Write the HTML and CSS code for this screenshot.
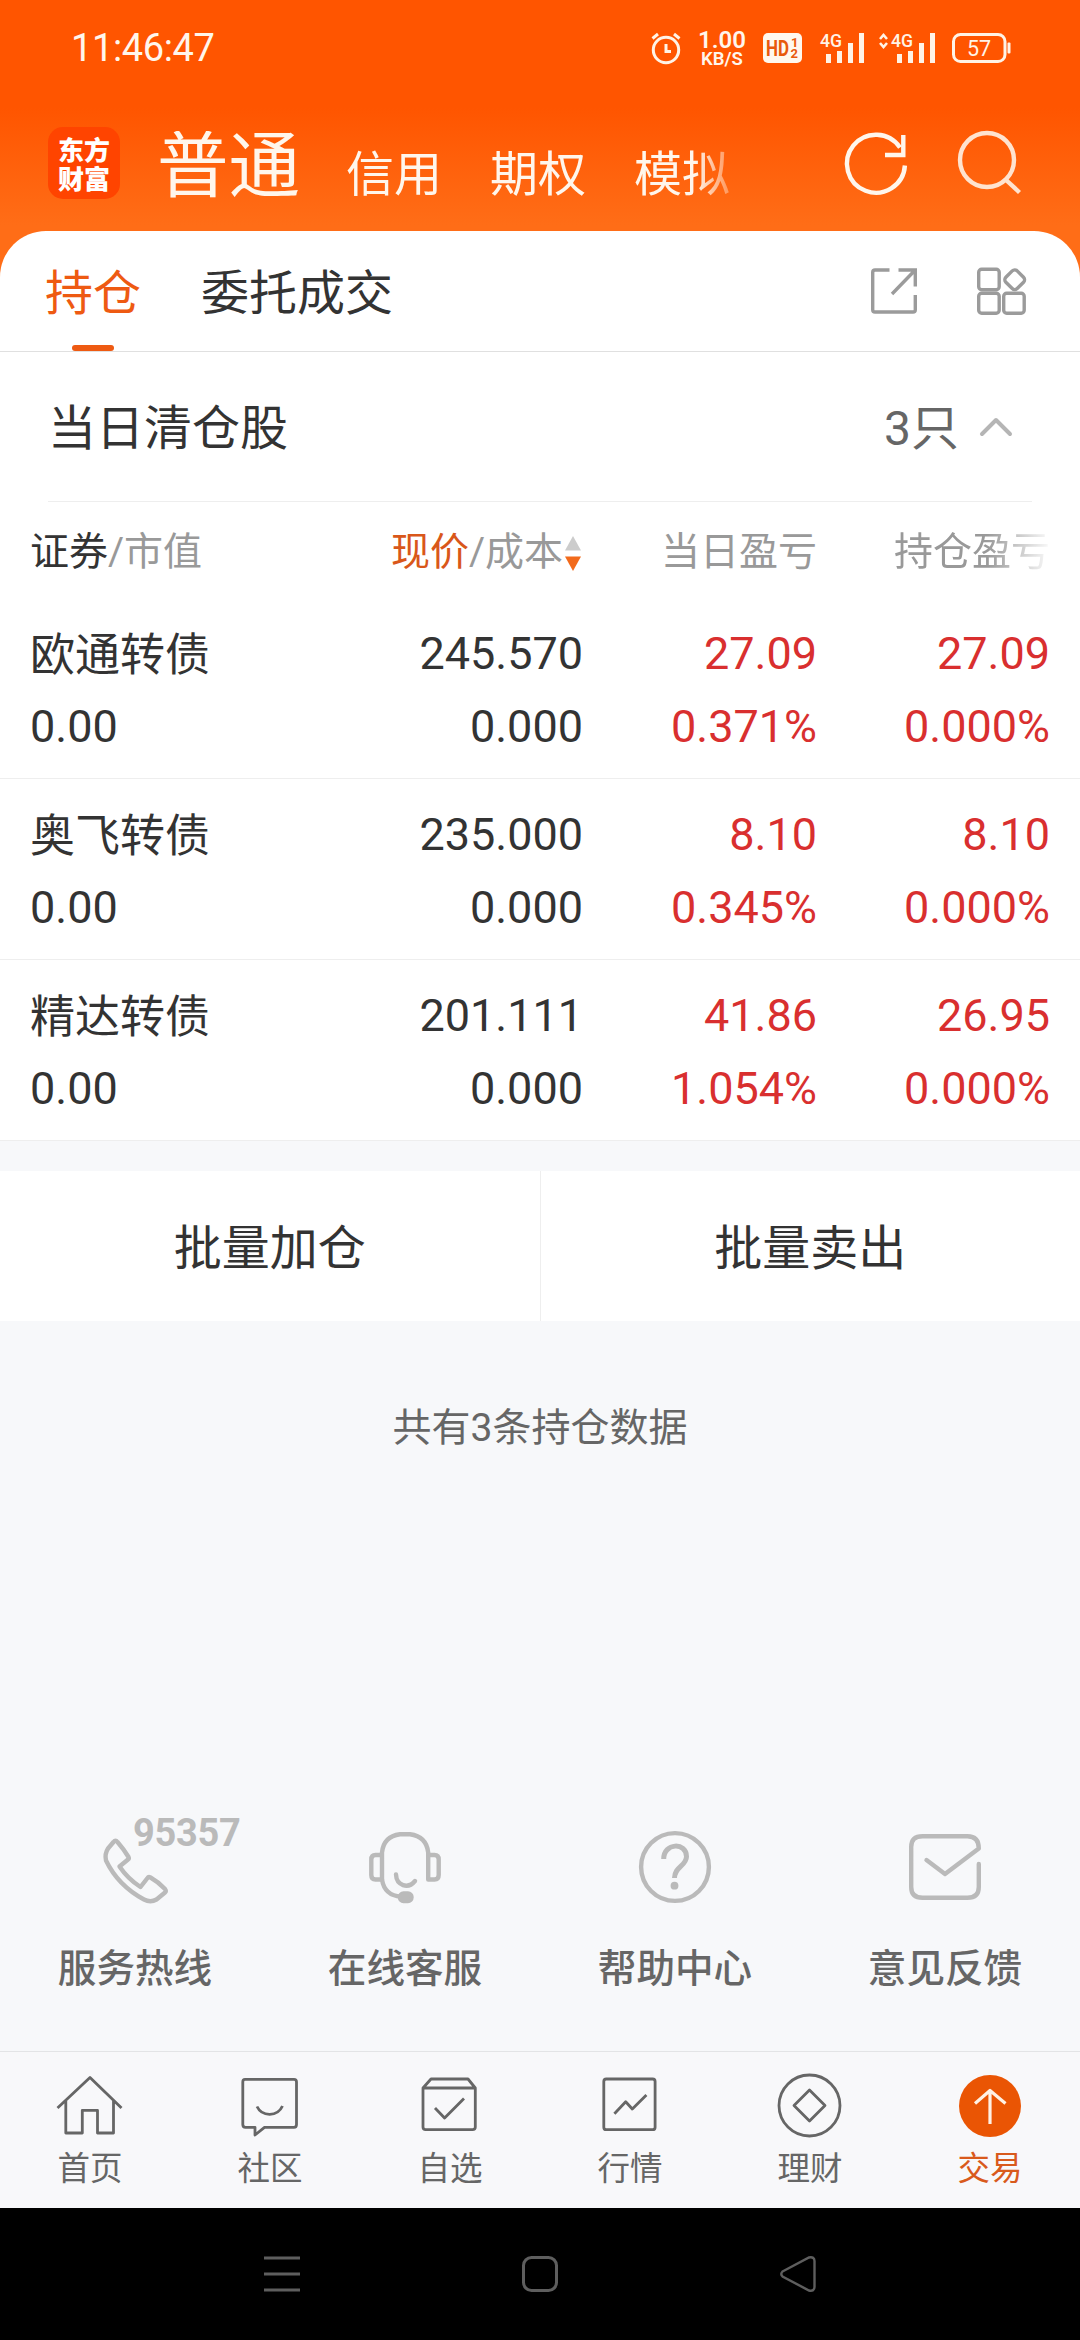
FILE: index.html
```html
<!DOCTYPE html>
<html lang="zh-CN">
<head>
    <meta charset="UTF-8">
    <meta name="viewport" content="width=device-width, initial-scale=1.0">
    <title>东方财富 - 交易</title>
    <link rel="stylesheet" href="styles.css">
</head>
<body>
    <div class="top">
        <div class="status-bar">
            <span class="clock">11:46:47</span>
            <div class="status-icons">
                <svg class="alarm" width="30" height="32" viewBox="0 0 30 32" fill="none" stroke="#fff3e6" stroke-width="3">
                    <circle cx="15" cy="18" r="12.7"/>
                    <path d="M1.5 6.5L7 2M28.5 6.5L23 2M15 12v7.5h5"/>
                </svg>
                <div class="speed"><b>1.00</b><span>KB/S</span></div>
                <svg class="hd" width="39" height="30" viewBox="0 0 39 30">
                    <rect width="39" height="30" rx="5" fill="#fff8ee"/>
                    <text x="3" y="23" font-size="22" textLength="23" lengthAdjust="spacingAndGlyphs">HD</text>
                    <text x="28" y="14" font-size="13">1</text>
                    <text x="27.5" y="25" font-size="13">2</text>
                </svg>
                <svg class="signal" width="44" height="30" viewBox="0 0 44 30">
                    <text x="0" y="14" font-size="19" textLength="22" lengthAdjust="spacingAndGlyphs">4G</text>
                    <path d="M6 21h5v9h-5zM17 18h5v12h-5zM28 10h5v20h-5zM39 0h5v30h-5z"/>
                </svg>
                <svg class="signal signal-2" width="56" height="30" viewBox="0 0 56 30">
                    <path d="M1 6l3.5-4 3.5 4M1 10l3.5 4 3.5-4" fill="none" stroke="#fff3e6" stroke-width="2.6"/>
                    <text x="12" y="14" font-size="19" textLength="22" lengthAdjust="spacingAndGlyphs">4G</text>
                    <path d="M18 21h5v9h-5zM29 18h5v12h-5zM40 10h5v20h-5zM51 0h5v30h-5z"/>
                </svg>
                <svg class="battery" width="59" height="30" viewBox="0 0 59 30">
                    <rect x="1.5" y="1.5" width="51.5" height="27" rx="7" fill="none" stroke="#fff3e6" stroke-width="3"/>
                    <rect x="55.5" y="9.5" width="3" height="11" rx="1" fill="#fff3e6"/>
                    <text x="27" y="22.5" font-size="21.5" text-anchor="middle">57</text>
                </svg>
            </div>
        </div>

        <header class="header">
            <div class="logo"><span>东方</span><span>财富</span></div>
            <nav class="accounts">
                <a class="current">普通</a>
                <a>信用</a>
                <a>期权</a>
                <a>模拟</a>
            </nav>
            <svg class="refresh" width="66" height="72" viewBox="0 0 66 72" fill="none" stroke="#fff6ec" stroke-width="4.4">
                <path d="M61.9 37.5A29 29 0 1 1 57 19.5"/>
                <path d="M60.3 7v20H42"/>
            </svg>
            <svg class="search" width="66" height="72" viewBox="0 0 66 72" fill="none" stroke="#ffe3cf" stroke-width="4.4">
                <circle cx="30" cy="32" r="27"/>
                <path d="M48.500 51.500L62.500 64.500"/>
            </svg>
        </header>
    </div>

    <main class="panel">
        <div class="tabs">
            <a class="tab active">持仓</a>
            <a class="tab">委托成交</a>
            <div class="tools">
                <svg width="46" height="48" viewBox="0 0 46 48" fill="none" stroke="#9b9b9b" stroke-width="3.4">
                    <path d="M18.500 3H4Q1.700 3 1.700 5.300V42.700Q1.700 45 4 45H42Q44.300 45 44.300 42.700V28"/>
                    <path d="M27.500 3H44.300V19.500M43.500 3.800L21 27"/>
                </svg>
                <svg width="50" height="48" viewBox="0 0 50 48" fill="none" stroke="#9b9b9b" stroke-width="3.4">
                    <rect x="1.700" y="2.200" width="20.500" height="20.500" rx="3"/>
                    <rect x="1.700" y="26.300" width="20.500" height="20" rx="3"/>
                    <rect x="26.700" y="26.300" width="20.500" height="20" rx="3"/>
                    <rect x="29.700" y="4.700" width="16" height="16" rx="3.500" transform="rotate(45 37.700 12.700)"/>
                </svg>
            </div>
        </div>

        <section class="cleared">
            <h2>当日清仓股</h2>
            <span class="count">3只</span>
            <svg width="34" height="20" viewBox="0 0 34 20" fill="none" stroke="#b5b5b5" stroke-width="4" stroke-linecap="round" stroke-linejoin="round">
                <path d="M3 17L17 3L31 17"/>
            </svg>
        </section>

        <div class="row thead">
            <div><span class="dark">证券</span>/市值</div>
            <div class="sorted"><span class="orange">现价</span>/成本<svg width="16" height="35" viewBox="0 0 16 35">
                <path d="M8 0L16 14.500H0z" fill="#ccc"/>
                <path d="M0 20.500H16L8 35z" fill="#f26a1b"/>
            </svg></div>
            <div>当日盈亏</div>
            <div class="fade">持仓盈亏</div>
        </div>

        <div class="row">
            <div><span class="name">欧通转债</span><br>0.00</div>
            <div>245.570<br>0.000</div>
            <div class="red">27.09<br>0.371%</div>
            <div class="red">27.09<br>0.000%</div>
        </div>
        <div class="row">
            <div><span class="name">奥飞转债</span><br>0.00</div>
            <div>235.000<br>0.000</div>
            <div class="red">8.10<br>0.345%</div>
            <div class="red">8.10<br>0.000%</div>
        </div>
        <div class="row">
            <div><span class="name">精达转债</span><br>0.00</div>
            <div>201.111<br>0.000</div>
            <div class="red">41.86<br>1.054%</div>
            <div class="red">26.95<br>0.000%</div>
        </div>
    </main>

    <div class="batch">
        <a>批量加仓</a>
        <a>批量卖出</a>
    </div>

    <p class="summary">共有3条持仓数据</p>

    <div class="services">
        <a>
            <svg width="72" height="72" viewBox="0 0 72 72">
                <path d="M14.500 11Q16.500 8.500 18.500 11Q25 18.500 29.500 26Q30.300 27.500 29 28.500L20.500 35.500Q29 48 41.500 56L48.500 47Q49.500 45.500 51.500 46.500Q59.500 51 66 58Q67.500 60 66 61.500L57.500 68.500Q51.500 72 45 68.500Q19 54.500 7 29.500Q5.500 23 9 17.500Z"/>
            </svg>
            <span class="number">95357</span>
            服务热线
        </a>
        <a>
            <svg width="72" height="72" viewBox="0 0 72 72">
                <path d="M13 24H6.500Q2.300 24 2.300 28.500V44Q2.300 48.500 6.500 48.500H13V21.500Q14.500 5.500 31 3.200H41Q57.500 5.500 59.200 21.500V48.500H65.500Q69.700 48.500 69.700 44V28.500Q69.700 24 65.500 24H59.500"/>
                <path d="M13 48.500Q15.500 64.500 32 65.700"/>
                <path d="M27 43.500C27.500 54.500 39 58.500 46 50"/>
                <rect x="31" y="62.500" width="11.500" height="7.500" rx="3.500" fill="#bababa"/>
            </svg>
            在线客服
        </a>
        <a>
            <svg width="72" height="72" viewBox="0 0 72 72">
                <circle cx="36" cy="36" r="33.900"/>
                <path d="M24.700 28C24.700 11.500 47.500 11 47.500 25.500C47.500 35 35.500 35.500 35.500 47" stroke-linecap="butt" stroke-width="5"/>
                <circle cx="35.500" cy="54.700" r="3.900" fill="#bababa" stroke="none"/>
            </svg>
            帮助中心
        </a>
        <a>
            <svg width="72" height="72" viewBox="0 0 72 72">
                <path d="M69.800 33V56Q69.800 66.800 58.500 66.800H13.500Q2.200 66.800 2.200 56V16Q2.200 5.200 13.500 5.200H58.500Q69.800 5.200 69.800 17.500L36 43L17.500 29"/>
            </svg>
            意见反馈
        </a>
    </div>

    <nav class="tabbar">
        <a>
            <svg width="72" height="72" viewBox="0 0 72 72"><path d="M3.500 38L36 7.500L67.500 38M11.800 31V63H28.300V40.300H43.500V63H59.500V31"/></svg>
            首页
        </a>
        <a>
            <svg width="72" height="72" viewBox="0 0 72 72"><path d="M11 9.300H60Q62.500 9.300 62.500 12V54.500Q62.500 57.300 60 57.300H30.500L21 65V57.300H11.500Q8.800 57.300 8.800 54.500V12Q8.800 9.300 11 9.300ZM23 36.500C28 47 43.500 47 48.500 36"/></svg>
            社区
        </a>
        <a>
            <svg width="72" height="72" viewBox="0 0 72 72"><path d="M9 18L17 9H54L61.300 18V57Q61.300 59.700 58.500 59.700H11.700Q9 59.700 9 57ZM9 18H61.300M21 38L30.600 48L50 28.500"/></svg>
            自选
        </a>
        <a>
            <svg width="72" height="72" viewBox="0 0 72 72"><rect x="9.800" y="9" width="51.300" height="50.700" rx="2.500"/><path d="M20.400 43.700L31.700 31.700L38.300 39L52.400 25"/></svg>
            行情
        </a>
        <a>
            <svg width="72" height="72" viewBox="0 0 72 72"><circle cx="35.500" cy="35.500" r="30.500"/><path d="M35.500 20L51 35.500L35.500 51L20 35.500Z"/></svg>
            理财
        </a>
        <a class="active">
            <svg width="72" height="72" viewBox="0 0 72 72"><circle cx="36" cy="36" r="31" fill="#ea5504" stroke="none"/><path d="M36 20.500V54M21 33.500L36 20.500L51.500 33.500" stroke="#fff1e4" stroke-width="3.200"/></svg>
            交易
        </a>
    </nav>

    <div class="system-nav">
        <svg width="36" height="36" viewBox="0 0 36 36"><path d="M0 2H36M0 18H36M0 34H36"/></svg>
        <svg width="36" height="36" viewBox="0 0 36 36"><rect x="1.500" y="1.500" width="33" height="33" rx="8"/></svg>
        <svg width="36" height="36" viewBox="0 0 36 36"><path d="M2.500 15.500L29 1.500Q34.500 .5 34.500 5V31Q34.500 35.500 29 34.500L2.500 20.500Q0 18 2.500 15.500Z" stroke-width="2.400"/></svg>
    </div>
</body>
</html>
```
FILE: styles.css
```css
* {
    box-sizing: border-box;
}
body {
    margin: 0;
    width: 1080px;
    height: 2340px;
    display: flex;
    flex-direction: column;
    overflow: hidden;
    background: #f7f8fa;
    color: #333;
    font-family: Roboto, "Noto Sans CJK SC", sans-serif;
}
svg {
    display: block;
    flex: none;
    overflow: visible;
}

/* 顶部橙色区域 */
.top {
    height: 290px;
    flex: none;
    color: #fff6ec;
    background: linear-gradient(#ff5500 0, #ff5500 108px, #ff6d17 225px, #ff6d17 290px);
}
.status-bar {
    height: 96px;
    padding: 0 69px 0 71px;
    display: flex;
    align-items: center;
    justify-content: space-between;
}
.clock {
    font-size: 38px;
    letter-spacing: -0.4px;
    line-height: 98px;
}
.status-icons {
    display: flex;
    align-items: center;
    fill: #fff3e6;
}
.speed {
    width: 48px;
    margin: 2px 17px 0 17px;
    display: flex;
    flex-direction: column;
    align-items: center;
    line-height: 18px;
    font-weight: 600;
}
.speed b {
    font-size: 24px;
    line-height: 20px;
    font-weight: 600;
}
.speed span {
    font-size: 18.5px;
}
.hd text {
    fill: #e8590c;
    font-weight: bold;
}
.signal {
    margin-left: 18px;
    font-weight: 500;
}
.signal-2 {
    margin-left: 15px;
}
.battery {
    margin-left: 17px;
}

.header {
    height: 135px;
    padding: 0 52px 0 48px;
    display: flex;
    align-items: center;
}
.logo {
    width: 72px;
    height: 72px;
    margin-bottom: 1px;
    flex: none;
    border-radius: 15px;
    background: #ff4400;
    display: flex;
    flex-direction: column;
    align-items: center;
    justify-content: center;
    color: #fff;
    font-family: "Noto Sans CJK SC", sans-serif;
    font-size: 26px;
    font-weight: 900;
    line-height: 29px;
}
.accounts {
    width: 590px;
    margin: 14px 0 0 37px;
    display: flex;
    align-items: baseline;
    gap: 48px;
    white-space: nowrap;
    font-size: 48px;
    line-height: 72px;
    -webkit-mask-image: linear-gradient(to right, #000 538px, transparent 590px);
    mask-image: linear-gradient(to right, #000 538px, transparent 590px);
}
.accounts .current {
    margin-right: -2px;
    font-size: 71.5px;
}
.refresh {
    margin-left: 96px;
}
.search {
    margin-left: 48px;
}

/* 持仓面板 */
.panel {
    margin-top: -59px;
    flex: none;
    border-radius: 46px 46px 0 0;
    background: #fff;
}
.tabs {
    height: 121px;
    padding: 0 53px 0 45px;
    display: flex;
    align-items: center;
    border-bottom: 1px solid #e0e0e0;
}
.tab {
    height: 120px;
    margin-right: 60px;
    font-size: 48px;
    line-height: 125px;
}
.tab.active {
    position: relative;
    color: #ee5a12;
}
.tab.active::after {
    content: "";
    position: absolute;
    left: 27px;
    bottom: 0;
    width: 42px;
    height: 6px;
    border-radius: 3px;
    background: #ee5a12;
}
.tools {
    margin-left: auto;
    display: flex;
    gap: 60px;
}
.cleared {
    height: 150px;
    margin: 0 48px;
    padding-right: 19px;
    display: flex;
    align-items: center;
    border-bottom: 1px solid #eee;
    line-height: 72px;
}
.cleared h2 {
    margin: 0 auto 0 0;
    padding-top: 4px;
    font-size: 48px;
    font-weight: normal;
}
.count {
    padding-top: 4px;
    margin-right: 20px;
    font-size: 48px;
    color: #666;
}

.row {
    height: 181px;
    padding: 19px 30px 0;
    display: grid;
    grid-template-columns: 319px 234px 234px 233px;
    border-bottom: 1px solid #eee;
    font-size: 45px;
    line-height: 73px;
    text-align: right;
}
.row > :first-child {
    text-align: left;
}
.thead {
    height: 96px;
    padding-top: 0;
    border: 0;
    font-size: 39px;
    line-height: 101px;
    color: #999;
}
.thead .sorted {
    display: flex;
    align-items: center;
    justify-content: flex-end;
    padding-right: 2px;
    white-space: nowrap;
}
.sorted svg {
    margin: 1px 0 0 2px;
}
.name {
    position: relative;
    top: 2px;
}
.dark {
    color: #333;
}
.orange {
    color: #d9571a;
}
.red {
    color: #d92f2f;
}
.fade {
    -webkit-mask-image: linear-gradient(to right, #000 170px, transparent 236px);
    mask-image: linear-gradient(to right, #000 170px, transparent 236px);
}

.batch {
    height: 150px;
    margin-top: 30px;
    flex: none;
    display: flex;
    background: #fff;
    font-size: 48px;
    line-height: 155px;
    text-align: center;
}
.batch a {
    flex: 1;
    height: 150px;
}
.batch a + a {
    border-left: 1px solid #eee;
}
.summary {
    margin: 76px 0 0;
    font-size: 39px;
    line-height: 62px;
    text-align: center;
    color: #666;
}

.services {
    margin-top: auto;
    height: 220px;
    flex: none;
    display: flex;
}
.services a {
    position: relative;
    flex: 1;
    display: flex;
    flex-direction: column;
    align-items: center;
    font-size: 38.6px;
    font-weight: 500;
    line-height: 60px;
    color: #666;
}
.services svg {
    margin-bottom: 36px;
    fill: none;
    stroke: #bababa;
    stroke-width: 4.4;
    stroke-linecap: round;
    stroke-linejoin: round;
}
.services .number {
    position: absolute;
    left: 133px;
    top: -21px;
    font-size: 38px;
    font-weight: bold;
    line-height: 46px;
    letter-spacing: -0.3px;
    color: #bababa;
}

.tabbar {
    height: 157px;
    padding-top: 18px;
    flex: none;
    display: flex;
    border-top: 1px solid #e3e4e6;
    background: #f8f8fa;
}
.tabbar a {
    flex: 1;
    display: flex;
    flex-direction: column;
    align-items: center;
    font-size: 32.5px;
    line-height: 55px;
    color: #666;
}
.tabbar .active {
    color: #d95a1c;
}
.tabbar svg {
    fill: none;
    stroke: #666;
    stroke-width: 2.8;
    stroke-linejoin: round;
}

.system-nav {
    height: 132px;
    padding: 0 264px;
    flex: none;
    display: flex;
    align-items: center;
    justify-content: space-between;
    background: #000;
    fill: none;
    stroke: #5e5e5e;
    stroke-width: 3;
}
```
